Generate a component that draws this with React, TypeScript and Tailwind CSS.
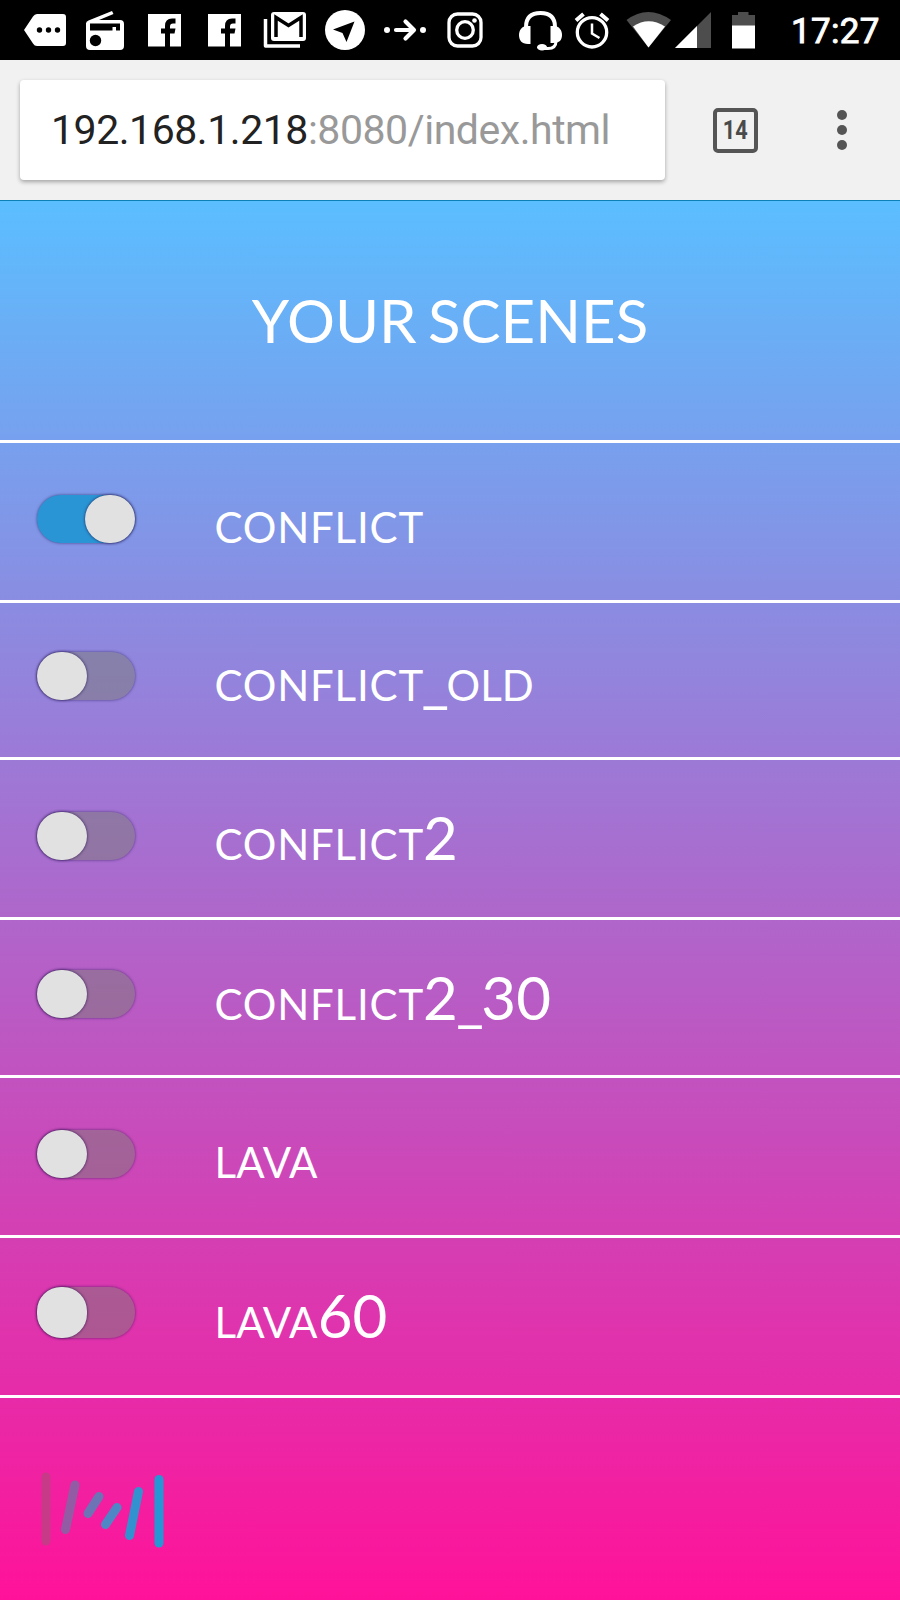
const rows = [
  { parts: ["conflict"], on: true, h: "h-[160px]", pad: "pt-[52px]", label: "mt-[-5px]" },
  { parts: ["conflict", "_", "old"], on: false, h: "h-[157px]", pad: "pt-[49px]", label: "mt-[-4px]" },
  { parts: ["conflict", "2"], on: false, h: "h-[160px]", pad: "pt-[52px]", label: "mt-[-5px]" },
  { parts: ["conflict", "2", "_", "30"], on: false, h: "h-[158px]", pad: "pt-[50px]", label: "mt-[-3px]" },
  { parts: ["lava"], on: false, h: "h-[160px]", pad: "pt-[52px]", label: "mt-[-5px]" },
  { parts: ["lava", "60"], on: false, round: true, h: "h-[160px]", pad: "pt-[49px]", label: "mt-[-2px]" },
];

const partStyle: Record<string, string> = {
  conflict: "tracking-[0.8px] mr-[-1px]",
  _: "ml-[-1.5px] mr-[-2.5px]",
  lava: "tracking-[0.2px]",
};

function StatusBar() {
  return (
    <header className="flex h-[60px] bg-black">
      <svg width="900" height="60" viewBox="0 0 900 60" fill="#fff">
        <path d="M24 30L33 16.500Q34.500 14 37 14H63Q66 14 66 17V43Q66 46 63 46H37Q34.500 46 33 43.500Z" />
        <g fill="#000">
          <circle cx="39.500" cy="30" r="2.700" /><circle cx="48.500" cy="30" r="2.700" /><circle cx="57.500" cy="30" r="2.700" />
        </g>
        <path d="M88.500 20.500L112 11L113.500 14L99 20H120Q124 20 124 24V46Q124 50 120 50H90Q86 50 86 46V23.500Q86 21.500 88.500 20.500Z" />
        <path d="M90 23.500H120V30.500H116V27H112.500V30.500H90Z" fill="#000" />
        <circle cx="95.500" cy="40.500" r="5.700" fill="#000" />
        {[148, 208].map((x) => (
          <g key={x} transform={`translate(${x} 14)`}>
            <path d="M0 0H33V32.500H0Z" />
            <path d="M17 33V19.500H13V14.500H17V12Q17 4.500 24 4.500H27.500V9.500H25Q22 9.500 22 12.500V14.500H27.500L26.500 19.500H22V33Z" fill="#000" />
          </g>
        ))}
        <path d="M265.500 19V46H300" fill="none" stroke="#fff" strokeWidth="3.500" strokeLinejoin="round" />
        <rect x="271" y="12" width="35" height="29" rx="3" />
        <path d="M276 37V17.500L288.500 25.500L301 17.500V37" fill="none" stroke="#000" strokeWidth="3.500" />
        <circle cx="345" cy="30" r="20" />
        <path d="M354.500 21.500L346.500 42L342.500 33L333 29.500Z" fill="#000" />
        <circle cx="387" cy="30" r="3" /><circle cx="423" cy="30" r="3" />
        <path d="M396 30H413M405.500 21.500L414 30L405.500 38.500" fill="none" stroke="#fff" strokeWidth="4.200" strokeLinecap="round" strokeLinejoin="round" />
        <g fill="none" stroke="#fff" strokeWidth="3.300">
          <rect x="449" y="14" width="32" height="32" rx="8.500" /><circle cx="465" cy="30" r="8.300" />
        </g>
        <circle cx="474.500" cy="20.500" r="2.300" />
        <path d="M526 27C526 17 532 13 540.500 13S555 17 555 27" fill="none" stroke="#fff" strokeWidth="4" />
        <path d="M530.500 26V44H528C521.500 44 519 40 519 35S522 26 527 26Z" />
        <path d="M550.500 26V43H553C559.500 43 562 40 562 35S559 26 554 26Z" />
        <path d="M556 41Q556 48.500 548 48.500H541" fill="none" stroke="#fff" strokeWidth="3" />
        <ellipse cx="542" cy="47.200" rx="5" ry="3.200" />
        <g fill="none" stroke="#fff">
          <circle cx="592" cy="32.300" r="14.700" strokeWidth="3.300" />
          <path d="M592 23.500V33.500L599.500 38" strokeWidth="2.500" />
          <path d="M576 20.500L583.500 14M608 20.500L600.500 14" strokeWidth="4" />
        </g>
        <path d="M626.500 20Q648 4 671 20L648.500 47.500Z" fill="#4d4d4d" />
        <path d="M633 26.500Q648.500 16 665 26.500L648.500 47.500Z" />
        <path d="M711 12V48H675Z" fill="#4d4d4d" />
        <path d="M697 26V48H675Z" />
        <path d="M732 15H738V12H748.500V15H755V26H732Z" fill="#4d4d4d" />
        <path d="M732 25.500H755V48.500H732Z" />
        <text x="791" y="43" fontFamily="Roboto" fontWeight="400" fontSize="35" stroke="#fff" strokeWidth="0.900" textLength="88.500" lengthAdjust="spacing">17:27</text>
      </svg>
    </header>
  );
}

function BrowserBar() {
  return (
    <div className="flex h-[140px] items-start bg-[#f1f1f1] pl-5 pt-5 font-['Roboto',sans-serif]">
      <div className="flex h-[100px] w-[645px] items-center rounded-[4px] bg-white pl-[31px] text-[41px] leading-none tracking-[-0.460px] whitespace-nowrap text-[#999] shadow-[0_2px_4px_rgba(0,0,0,0.32)]">
        <span className="text-[#222]">192.168.1.218</span>
        <span>:8080/index.html</span>
      </div>
      <div className="mt-[27.500px] ml-[47.500px] flex h-[45px] w-[45px] items-center justify-center rounded-[5px] border-[4.500px] border-[#555] pt-px text-[25px] leading-none font-bold text-[#4a4a4a]">
        <span className="inline-block scale-x-[0.87]">14</span>
      </div>
      <div className="mt-[30px] ml-[79.500px] flex flex-col gap-[5px]">
        <i className="h-[10px] w-[10px] rounded-full bg-[#555]" />
        <i className="h-[10px] w-[10px] rounded-full bg-[#555]" />
        <i className="h-[10px] w-[10px] rounded-full bg-[#555]" />
      </div>
    </div>
  );
}

function Toggle({ on, round }: { on: boolean; round?: boolean }) {
  return (
    <div className={`flex w-[98px] shrink-0 rounded-[25px] shadow-[0_0_3px_rgba(30,20,80,0.65)] ${round ? "h-[51px]" : "h-12"} ${on ? "justify-end bg-[#2a95d5]" : "justify-start bg-[#7c7c78]/50"}`}>
      <div className="h-full w-[50px] rounded-[24px] bg-[#e1e1e1] shadow-[0_0_3px_rgba(20,0,60,0.8)]" />
    </div>
  );
}

export default function App() {
  return (
    <div className="h-[1600px] w-[900px] overflow-hidden bg-black">
      <StatusBar />
      <BrowserBar />
      <main className="h-[1400px] border-t border-[#0e80b8] bg-linear-to-b/srgb from-[#5bbeff] to-[#ff1299] font-['Lato',sans-serif] text-white">
        <h1 className="flex h-[239px] items-center justify-center pb-[2px] text-[60px] leading-none [word-spacing:-4px]">YOUR SCENES</h1>
        {rows.map((r) => (
          <section key={r.parts.join("")} className={`flex items-start border-t-[3px] border-white pl-[37px] ${r.h} ${r.pad}`}>
            <Toggle on={r.on} round={r.round} />
            <span className={`ml-[79.500px] text-[60px] leading-[60px] [font-variant:small-caps] ${r.label}`}>
              {r.parts.map((p) => (
                <span key={p} className={partStyle[p]}>{p}</span>
              ))}
            </span>
          </section>
        ))}
        <footer className="border-t-[3px] border-white pt-[71.500px] pl-[38px]">
          <svg width="130" height="80" viewBox="38 1470 130 80" fill="none" strokeWidth="9" strokeLinecap="round">
            <path d="M46 1477V1541" stroke="#c63a87" />
            <path d="M75 1485L65.500 1529.500" stroke="#935ba4" />
            <path d="M99 1496.500L88 1513.500" stroke="#6c74b6" />
            <path d="M117 1507.500L105.500 1524.500" stroke="#4f87c6" />
            <path d="M138.500 1491.500L129.500 1535.500" stroke="#3491cf" />
            <path d="M159 1479.500V1543" stroke="#2597d5" />
          </svg>
        </footer>
      </main>
    </div>
  );
}
